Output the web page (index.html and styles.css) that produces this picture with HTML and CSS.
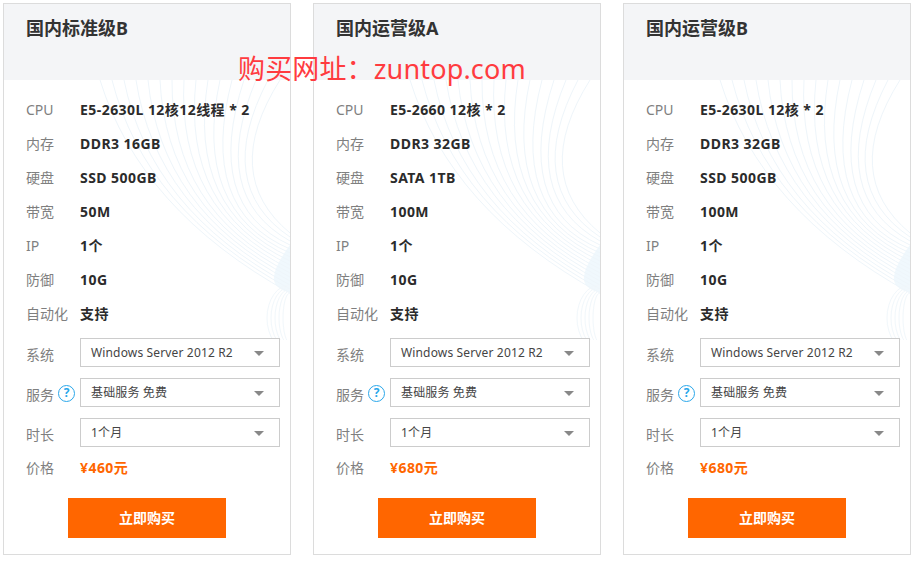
FILE: index.html
```html
<!DOCTYPE html>
<html lang="zh-CN">
<head>
<meta charset="utf-8">
<title>国内服务器</title>
<link rel="stylesheet" href="styles.css">
</head>
<body>
<svg class="defs" width="0" height="0" aria-hidden="true">
  <symbol id="wave" viewBox="0 0 200 260">
    <path d="M200 165Q178 195 186 205Q192 212 200 212Z" fill="#f0f8fd"/>
    <g fill="none" stroke="#eef5fa" stroke-width="1">
      <path d="M10 0Q50 130 200 213"/><path d="M22 0Q55 130 200 209"/>
      <path d="M34 0Q60 130 200 205"/><path d="M46 0Q66 130 200 201"/>
      <path d="M58 0Q71 130 200 197"/><path d="M70 0Q76 130 200 193"/>
      <path d="M82 0Q81 130 200 189"/><path d="M94 0Q87 130 200 185"/>
      <path d="M106 0Q92 130 200 181"/><path d="M118 0Q97 130 200 177"/>
      <path d="M130 0Q102 130 200 173"/><path d="M142 0Q108 130 200 169"/>
      <path d="M154 0Q113 125 200 165"/><path d="M166 0Q118 115 200 161"/>
      <path d="M178 0Q123 105 200 157"/><path d="M190 0Q130 95 200 153"/>
    </g>
    <g fill="none" stroke="#f1f7fb" stroke-width="1">
      <ellipse cx="200" cy="238" rx="7" ry="25"/><ellipse cx="200" cy="238" rx="11" ry="27"/>
      <ellipse cx="200" cy="238" rx="15" ry="29"/><ellipse cx="200" cy="238" rx="19" ry="31"/>
      <ellipse cx="200" cy="238" rx="23" ry="33"/>
    </g>
  </symbol>
</svg>
<p class="mark">购买网址：zuntop.com</p>
<main class="plans">
  <section class="card">
    <svg class="wave"><use href="#wave"/></svg>
    <h2 class="title">国内标准级B</h2>
    <div class="body">
      <dl class="specs">
        <div class="row"><dt>CPU</dt><dd>E5-2630L 12核12线程 * 2</dd></div>
        <div class="row"><dt>内存</dt><dd>DDR3 16GB</dd></div>
        <div class="row"><dt>硬盘</dt><dd>SSD 500GB</dd></div>
        <div class="row"><dt>带宽</dt><dd>50M</dd></div>
        <div class="row"><dt>IP</dt><dd>1个</dd></div>
        <div class="row"><dt>防御</dt><dd>10G</dd></div>
        <div class="row"><dt>自动化</dt><dd>支持</dd></div>
      </dl>
      <div class="options">
        <div class="opt"><span class="lbl">系统</span><div class="select">Windows Server 2012 R2</div></div>
        <div class="opt"><span class="lbl">服务<span class="help">?</span></span><div class="select">基础服务 免费</div></div>
        <div class="opt"><span class="lbl">时长</span><div class="select">1个月</div></div>
      </div>
      <div class="price"><span class="lbl">价格</span><strong>¥460元</strong></div>
      <a class="buy">立即购买</a>
    </div>
  </section>
  <section class="card">
    <svg class="wave"><use href="#wave"/></svg>
    <h2 class="title">国内运营级A</h2>
    <div class="body">
      <dl class="specs">
        <div class="row"><dt>CPU</dt><dd>E5-2660 12核 * 2</dd></div>
        <div class="row"><dt>内存</dt><dd>DDR3 32GB</dd></div>
        <div class="row"><dt>硬盘</dt><dd>SATA 1TB</dd></div>
        <div class="row"><dt>带宽</dt><dd>100M</dd></div>
        <div class="row"><dt>IP</dt><dd>1个</dd></div>
        <div class="row"><dt>防御</dt><dd>10G</dd></div>
        <div class="row"><dt>自动化</dt><dd>支持</dd></div>
      </dl>
      <div class="options">
        <div class="opt"><span class="lbl">系统</span><div class="select">Windows Server 2012 R2</div></div>
        <div class="opt"><span class="lbl">服务<span class="help">?</span></span><div class="select">基础服务 免费</div></div>
        <div class="opt"><span class="lbl">时长</span><div class="select">1个月</div></div>
      </div>
      <div class="price"><span class="lbl">价格</span><strong>¥680元</strong></div>
      <a class="buy">立即购买</a>
    </div>
  </section>
  <section class="card">
    <svg class="wave"><use href="#wave"/></svg>
    <h2 class="title">国内运营级B</h2>
    <div class="body">
      <dl class="specs">
        <div class="row"><dt>CPU</dt><dd>E5-2630L 12核 * 2</dd></div>
        <div class="row"><dt>内存</dt><dd>DDR3 32GB</dd></div>
        <div class="row"><dt>硬盘</dt><dd>SSD 500GB</dd></div>
        <div class="row"><dt>带宽</dt><dd>100M</dd></div>
        <div class="row"><dt>IP</dt><dd>1个</dd></div>
        <div class="row"><dt>防御</dt><dd>10G</dd></div>
        <div class="row"><dt>自动化</dt><dd>支持</dd></div>
      </dl>
      <div class="options">
        <div class="opt"><span class="lbl">系统</span><div class="select">Windows Server 2012 R2</div></div>
        <div class="opt"><span class="lbl">服务<span class="help">?</span></span><div class="select">基础服务 免费</div></div>
        <div class="opt"><span class="lbl">时长</span><div class="select">1个月</div></div>
      </div>
      <div class="price"><span class="lbl">价格</span><strong>¥680元</strong></div>
      <a class="buy">立即购买</a>
    </div>
  </section>
</main>
</body>
</html>
```
FILE: styles.css
```css
* { box-sizing: border-box; }
html, body { margin: 0; padding: 0; }
body {
  width: 915px;
  height: 561px;
  overflow: hidden;
  background: #fff;
  color: #333;
  font-family: "Noto Sans", "Noto Sans CJK SC", sans-serif;
  font-size: 14px;
  position: relative;
}
.defs { position: absolute; }
.plans {
  display: flex;
  gap: 22px;
  padding: 3px 0 0 3px;
}
.card {
  position: relative;
  width: 288px;
  height: 552px;
  border: 1px solid #dcdcdc;
  background: #fff;
  overflow: hidden;
}
.wave {
  position: absolute;
  right: 0;
  top: 76px;
  width: 200px;
  height: 260px;
}
.title {
  position: relative;
  margin: 0;
  height: 76px;
  padding: 10px 0 0 22px;
  background: #f4f5f7;
  color: #333;
  font-size: 18px;
  font-weight: 700;
  line-height: 29px;
}
.body { position: relative; padding: 12px 10px 0 22px; }
.specs { margin: 0; }
.row {
  display: flex;
  height: 34px;
  align-items: center;
}
dt { width: 54px; flex: none; color: #7f7f7f; font-weight: 400; white-space: nowrap; }
dd { margin: 0; font-weight: 700; color: #2b2b2b; white-space: nowrap; letter-spacing: 0.45px; }
.options {
  display: flex;
  flex-direction: column;
  gap: 11px;
  margin-top: 8px;
}
.opt { display: flex; align-items: center; height: 29px; }
.lbl {
  width: 54px;
  flex: none;
  color: #7f7f7f;
  display: flex;
  align-items: center;
  gap: 4px;
  padding-top: 2px;
}
.help {
  width: 17px;
  height: 17px;
  border: 1.5px solid #2aa7ea;
  border-radius: 50%;
  color: #2aa7ea;
  font-size: 12px;
  font-weight: 700;
  line-height: 14px;
  text-align: center;
}
.select {
  position: relative;
  width: 200px;
  height: 29px;
  border: 1px solid #cccccc;
  background: #fff;
  padding-left: 10px;
  font-size: 12px;
  line-height: 27px;
  color: #444;
  letter-spacing: 0.15px;
}
.select::after {
  content: "";
  position: absolute;
  right: 15px;
  top: 12px;
  border-style: solid;
  border-width: 5px 5.5px 0;
  border-color: #888 transparent transparent;
}
.price { display: flex; align-items: center; height: 22px; margin-top: 9px; }
.price .lbl { padding-top: 0; }
.price strong { color: #ff6600; font-weight: 700; letter-spacing: 0.45px; }
.buy {
  display: block;
  width: 158px;
  height: 40px;
  margin: 20px 0 0 42px;
  background: #ff6600;
  color: #fff;
  text-align: center;
  font-weight: 700;
  line-height: 40px;
}
.mark {
  position: absolute;
  z-index: 2;
  left: 238px;
  top: 50px;
  margin: 0;
  color: #ff3b3f;
  font-size: 27px;
  line-height: 38px;
  letter-spacing: 0.15px;
  white-space: nowrap;
}
```
